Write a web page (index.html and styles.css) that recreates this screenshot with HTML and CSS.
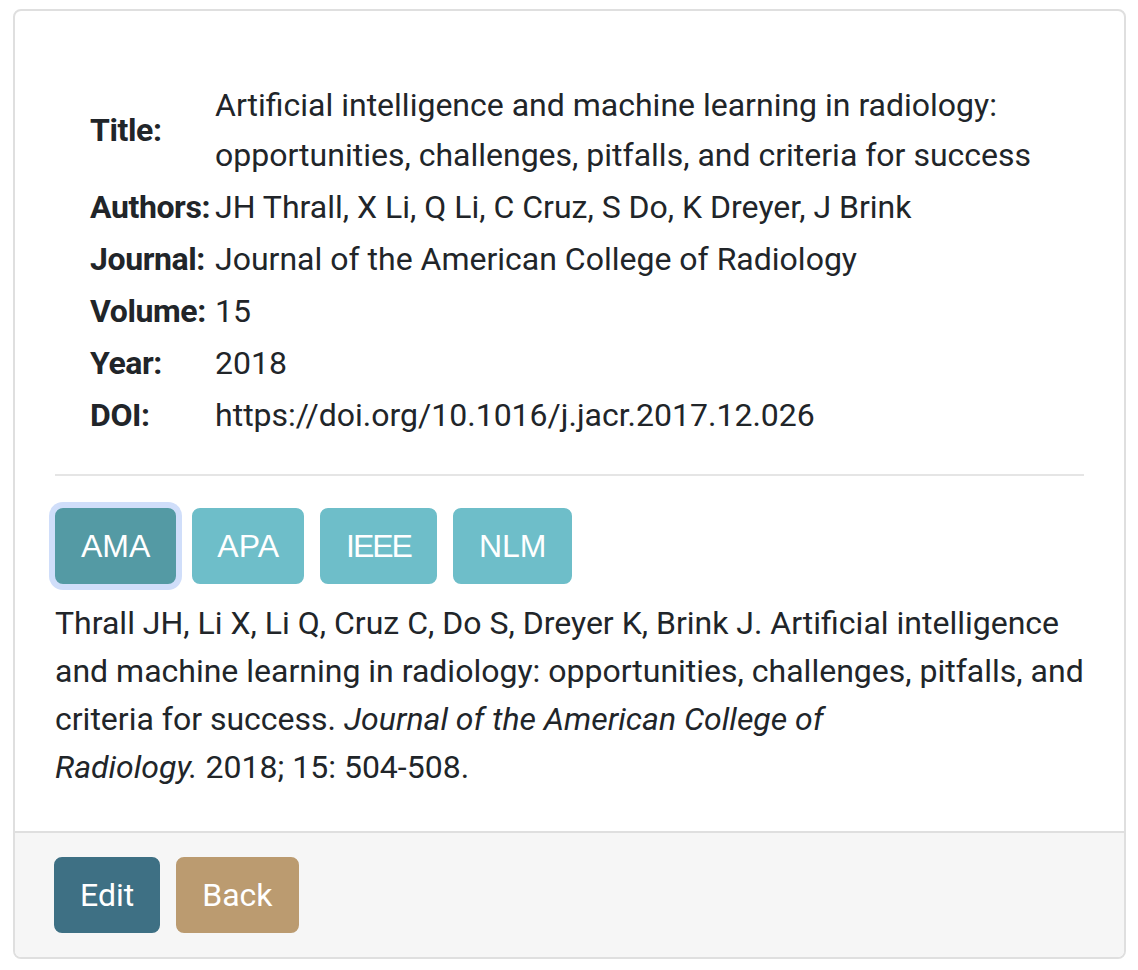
FILE: index.html
```html
<!DOCTYPE html>
<html lang="en">
<head>
<meta charset="utf-8">
<title>Publication</title>
<link rel="stylesheet" href="styles.css">
</head>
<body>
<div class="card">
  <div class="card-body">
    <div class="meta-wrap">
      <table class="meta">
        <tr><th>Title:</th><td>Artificial intelligence and machine learning in radiology: opportunities, challenges, pitfalls, and criteria for success</td></tr>
        <tr><th>Authors:</th><td>JH Thrall, X Li, Q Li, C Cruz, S Do, K Dreyer, J Brink</td></tr>
        <tr><th>Journal:</th><td>Journal of the American College of Radiology</td></tr>
        <tr><th>Volume:</th><td>15</td></tr>
        <tr><th>Year:</th><td>2018</td></tr>
        <tr><th>DOI:</th><td>https://doi.org/10.1016/j.jacr.2017.12.026</td></tr>
      </table>
    </div>
    <hr class="divider">
    <div class="styles">
      <button class="style-btn active">AMA</button>
      <button class="style-btn style-btn-apa">APA</button>
      <button class="style-btn style-btn-tight">IEEE</button>
      <button class="style-btn">NLM</button>
    </div>
    <p class="citation">Thrall JH, Li X, Li Q, Cruz C, Do S, Dreyer K, Brink J. Artificial intelligence and machine learning in radiology: opportunities, challenges, pitfalls, and criteria for success. <em>Journal of the American College of Radiology.</em>&nbsp;2018;&nbsp;15:&nbsp;504-508.</p>
  </div>
  <div class="card-footer">
    <button class="btn btn-edit">Edit</button>
    <button class="btn btn-back">Back</button>
  </div>
</div>
</body>
</html>
```
FILE: styles.css
```css
* { box-sizing: border-box; }
html, body { margin: 0; padding: 0; background: #fff; }
body {
  padding: 9px 12px 0 13px;
  font-family: Roboto, "Liberation Sans", Arial, sans-serif;
  font-size: 32px;
  line-height: 1.5;
  color: #212529;
}
.card {
  border: 2px solid #dfdfdf;
  border-radius: 8px;
  overflow: hidden;
  background: #fff;
}
.card-body {
  padding: 40px;
}
.meta-wrap {
  padding: 28px 0 0 33px;
}
.meta {
  border-collapse: collapse;
  line-height: 50px;
}
.meta th, .meta td {
  padding: 1px 2px;
  text-align: left;
}
.meta th {
  font-weight: 700;
  white-space: nowrap;
  vertical-align: middle;
  letter-spacing: -0.4px;
  padding-right: 3px;
}
.meta td {
  vertical-align: top;
  padding-left: 2px;
}
.divider {
  margin: 33px 0 32px;
  border: 0;
  border-top: 2px solid #e5e5e5;
  height: 0;
}
.styles {
  display: flex;
  gap: 16px;
}
.style-btn {
  font-family: "Liberation Sans", Arial, sans-serif;
  font-size: 32px;
  line-height: 48px;
  padding: 12px 24px;
  border: 2px solid #6ebec9;
  background: #6ebec9;
  color: #fff;
  border-radius: 8px;
  cursor: pointer;
}
.style-btn-apa {
  padding: 12px 23px;
}
.style-btn-tight {
  letter-spacing: -2px;
  padding-right: 24px;
}
.style-btn.active {
  background: #549aa4;
  border-color: #549aa4;
  box-shadow: 0 0 0 6px #d0defa;
}
.citation {
  margin: 15px 0 0;
}
.citation em { font-style: italic; }
.card-footer {
  background: #f6f6f6;
  border-top: 2px solid #dfdfdf;
  padding: 24px 40px 24px 39px;
  display: flex;
  gap: 16px;
}
.btn {
  font-family: Roboto, sans-serif;
  font-size: 32px;
  line-height: 48px;
  padding: 12px 24px;
  border-radius: 8px;
  color: #fff;
  cursor: pointer;
}
.btn-edit { background: #3e7084; border: 2px solid #3e7084; }
.btn-back { background: #bb9b70; border: 2px solid #bb9b70; }
```
